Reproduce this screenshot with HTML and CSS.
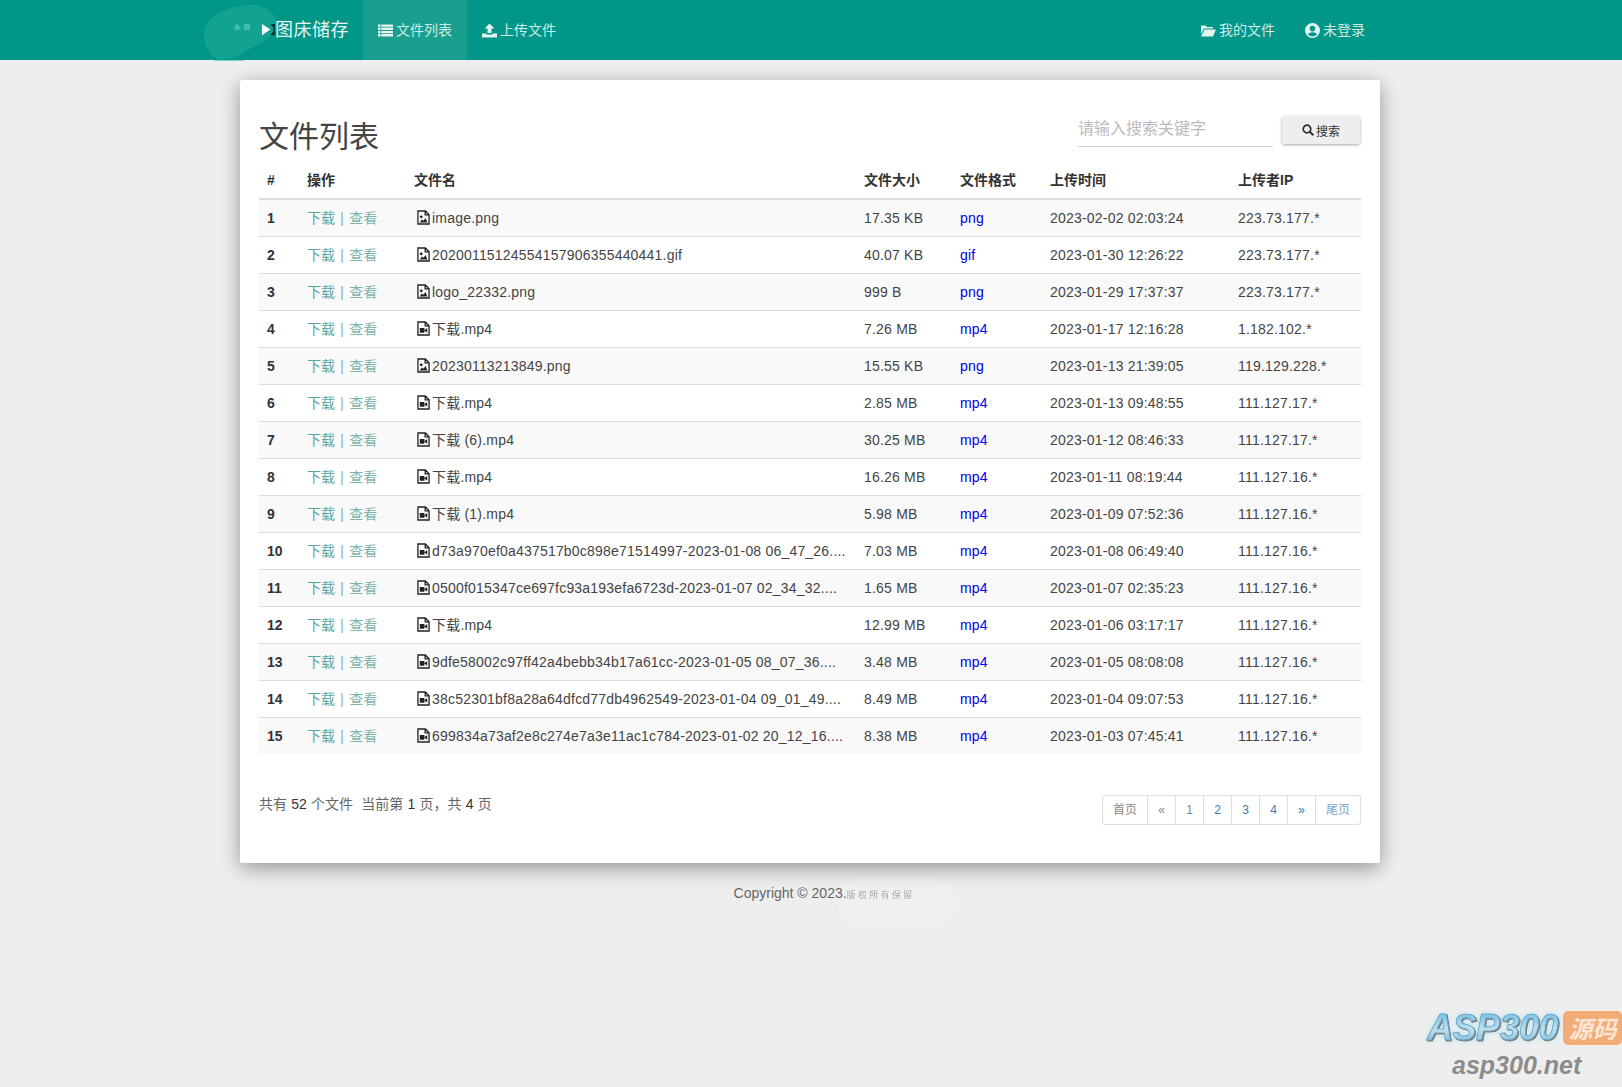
FILE: index.html
```html
<!DOCTYPE html>
<html lang="zh-CN">
<head>
<meta charset="utf-8">
<title>文件列表</title>
<link rel="stylesheet" href="styles.css">
</head>
<body>
<svg class="defs" width="0" height="0" aria-hidden="true">
  <symbol id="i-img" viewBox="0 0 14 16"><path fill="none" stroke="currentColor" stroke-width="1.4" d="M1 1h8l4 4v10H1zM8.800 1v4.200H13"/><path fill="currentColor" d="M2.800 13.500l2.700-3.400 1.500 1.500 2.200-3 2 4.900z"/><circle cx="4.600" cy="7.300" r="1.500" fill="currentColor"/></symbol>
  <symbol id="i-vid" viewBox="0 0 14 16"><path fill="none" stroke="currentColor" stroke-width="1.4" d="M1 1h8l4 4v10H1zM8.800 1v4.200H13"/><path fill="currentColor" d="M3 7.500h5v5H3zM8 9.800l3-2.300v5l-3-2.300z"/></symbol>
</svg>
<header class="navbar">
  <div class="nav-inner">
    <svg class="nav-blob" viewBox="0 0 76 60" aria-hidden="true"><path class="blob-body" d="M1 36C0 20 18 8 44 5c16-2 30 8 30 20 0 14-20 18-30 26-6 5-18 8-28 9C8 56 2 48 1 36z"/><path class="blob-mark" d="M31 27l3-4 4 5-2 2h-4zM41 24h6v6h-6z"/><path class="blob-line" d="M11 60.500h30"/></svg>
    <a class="brand"><svg class="brand-play" viewBox="0 0 16 16" aria-hidden="true"><path fill="#fff" d="M1 2l9 6-9 6z"/><path fill="#17352f" d="M10 2h5v12h-5l2-3h1V5h-1z"/></svg>图床储存</a>
    <a class="nav-link active"><svg class="nav-icon" viewBox="0 0 15 12" aria-hidden="true"><path fill="currentColor" d="M0 0h2.500v2.300H0zM3.300 0H15v2.300H3.300zM0 3.100h2.500v2.400H0zM3.300 3.100H15v2.400H3.300zM0 6.400h2.500v2.400H0zM3.300 6.400H15v2.400H3.300zM0 9.600h2.500V12H0zM3.300 9.600H15V12H3.300z"/></svg>文件列表</a>
    <a class="nav-link"><svg class="nav-icon" viewBox="0 0 15 14" aria-hidden="true"><path fill="currentColor" d="M7.500 0L12.500 5H9.500v4.500h-4V5h-3zM0 10h4.500v1h6v-1H15v4H0z"/></svg>上传文件</a>
    <div class="nav-right">
      <a class="nav-link"><svg class="nav-icon" viewBox="0 0 15 12" aria-hidden="true"><path fill="currentColor" d="M0 1h5l1 1.500h6V4H3L0 10zM3.600 5H15l-3 7H0z"/></svg>我的文件</a>
      <a class="nav-link"><svg class="nav-icon" viewBox="0 0 15 15" aria-hidden="true"><path fill="currentColor" fill-rule="evenodd" d="M7.500 0a7.500 7.500 0 1 0 0 15 7.500 7.500 0 0 0 0-15zm0 2.800a2.800 2.800 0 1 1 0 5.600 2.800 2.800 0 0 1 0-5.600zm0 10.600c-1.800 0-3.400-.8-4.500-2.100.5-1.200 2.600-2 4.500-2s4 .8 4.500 2c-1.100 1.300-2.700 2.100-4.500 2.100z"/></svg>未登录</a>
    </div>
  </div>
</header>

<main class="card">
  <div class="card-head">
    <h1>文件列表</h1>
    <form class="search">
      <input class="search-input" type="text" placeholder="请输入搜索关键字">
      <button class="search-btn" type="button"><svg class="search-icon" viewBox="0 0 12 12" aria-hidden="true"><circle cx="5" cy="5" r="3.800" fill="none" stroke="currentColor" stroke-width="1.700"/><path stroke="currentColor" stroke-width="2" d="M7.800 7.800L11.300 11.300"/></svg>搜索</button>
    </form>
  </div>
  <table class="files">
    <colgroup><col class="c-n"><col class="c-op"><col class="c-name"><col class="c-size"><col class="c-fmt"><col class="c-time"><col class="c-ip"></colgroup>
    <thead><tr><th>#</th><th>操作</th><th>文件名</th><th>文件大小</th><th>文件格式</th><th>上传时间</th><th>上传者IP</th></tr></thead>
    <tbody>
      <tr><td class="num">1</td><td><a class="op">下载</a> <i>|</i> <a class="op view">查看</a></td><td><div class="fname"><svg class="ficon"><use href="#i-img"/></svg><span>image.png</span></div></td><td>17.35 KB</td><td><a class="fmt">png</a></td><td>2023-02-02 02:03:24</td><td>223.73.177.*</td></tr>
      <tr><td class="num">2</td><td><a class="op">下载</a> <i>|</i> <a class="op view">查看</a></td><td><div class="fname"><svg class="ficon"><use href="#i-img"/></svg><span>20200115124554157906355440441.gif</span></div></td><td>40.07 KB</td><td><a class="fmt">gif</a></td><td>2023-01-30 12:26:22</td><td>223.73.177.*</td></tr>
      <tr><td class="num">3</td><td><a class="op">下载</a> <i>|</i> <a class="op view">查看</a></td><td><div class="fname"><svg class="ficon"><use href="#i-img"/></svg><span>logo_22332.png</span></div></td><td>999 B</td><td><a class="fmt">png</a></td><td>2023-01-29 17:37:37</td><td>223.73.177.*</td></tr>
      <tr><td class="num">4</td><td><a class="op">下载</a> <i>|</i> <a class="op view">查看</a></td><td><div class="fname"><svg class="ficon"><use href="#i-vid"/></svg><span>下载.mp4</span></div></td><td>7.26 MB</td><td><a class="fmt">mp4</a></td><td>2023-01-17 12:16:28</td><td>1.182.102.*</td></tr>
      <tr><td class="num">5</td><td><a class="op">下载</a> <i>|</i> <a class="op view">查看</a></td><td><div class="fname"><svg class="ficon"><use href="#i-img"/></svg><span>20230113213849.png</span></div></td><td>15.55 KB</td><td><a class="fmt">png</a></td><td>2023-01-13 21:39:05</td><td>119.129.228.*</td></tr>
      <tr><td class="num">6</td><td><a class="op">下载</a> <i>|</i> <a class="op view">查看</a></td><td><div class="fname"><svg class="ficon"><use href="#i-vid"/></svg><span>下载.mp4</span></div></td><td>2.85 MB</td><td><a class="fmt">mp4</a></td><td>2023-01-13 09:48:55</td><td>111.127.17.*</td></tr>
      <tr><td class="num">7</td><td><a class="op">下载</a> <i>|</i> <a class="op view">查看</a></td><td><div class="fname"><svg class="ficon"><use href="#i-vid"/></svg><span>下载 (6).mp4</span></div></td><td>30.25 MB</td><td><a class="fmt">mp4</a></td><td>2023-01-12 08:46:33</td><td>111.127.17.*</td></tr>
      <tr><td class="num">8</td><td><a class="op">下载</a> <i>|</i> <a class="op view">查看</a></td><td><div class="fname"><svg class="ficon"><use href="#i-vid"/></svg><span>下载.mp4</span></div></td><td>16.26 MB</td><td><a class="fmt">mp4</a></td><td>2023-01-11 08:19:44</td><td>111.127.16.*</td></tr>
      <tr><td class="num">9</td><td><a class="op">下载</a> <i>|</i> <a class="op view">查看</a></td><td><div class="fname"><svg class="ficon"><use href="#i-vid"/></svg><span>下载 (1).mp4</span></div></td><td>5.98 MB</td><td><a class="fmt">mp4</a></td><td>2023-01-09 07:52:36</td><td>111.127.16.*</td></tr>
      <tr><td class="num">10</td><td><a class="op">下载</a> <i>|</i> <a class="op view">查看</a></td><td><div class="fname"><svg class="ficon"><use href="#i-vid"/></svg><span>d73a970ef0a437517b0c898e71514997-2023-01-08 06_47_26....</span></div></td><td>7.03 MB</td><td><a class="fmt">mp4</a></td><td>2023-01-08 06:49:40</td><td>111.127.16.*</td></tr>
      <tr><td class="num">11</td><td><a class="op">下载</a> <i>|</i> <a class="op view">查看</a></td><td><div class="fname"><svg class="ficon"><use href="#i-vid"/></svg><span>0500f015347ce697fc93a193efa6723d-2023-01-07 02_34_32....</span></div></td><td>1.65 MB</td><td><a class="fmt">mp4</a></td><td>2023-01-07 02:35:23</td><td>111.127.16.*</td></tr>
      <tr><td class="num">12</td><td><a class="op">下载</a> <i>|</i> <a class="op view">查看</a></td><td><div class="fname"><svg class="ficon"><use href="#i-vid"/></svg><span>下载.mp4</span></div></td><td>12.99 MB</td><td><a class="fmt">mp4</a></td><td>2023-01-06 03:17:17</td><td>111.127.16.*</td></tr>
      <tr><td class="num">13</td><td><a class="op">下载</a> <i>|</i> <a class="op view">查看</a></td><td><div class="fname"><svg class="ficon"><use href="#i-vid"/></svg><span>9dfe58002c97ff42a4bebb34b17a61cc-2023-01-05 08_07_36....</span></div></td><td>3.48 MB</td><td><a class="fmt">mp4</a></td><td>2023-01-05 08:08:08</td><td>111.127.16.*</td></tr>
      <tr><td class="num">14</td><td><a class="op">下载</a> <i>|</i> <a class="op view">查看</a></td><td><div class="fname"><svg class="ficon"><use href="#i-vid"/></svg><span>38c52301bf8a28a64dfcd77db4962549-2023-01-04 09_01_49....</span></div></td><td>8.49 MB</td><td><a class="fmt">mp4</a></td><td>2023-01-04 09:07:53</td><td>111.127.16.*</td></tr>
      <tr><td class="num">15</td><td><a class="op">下载</a> <i>|</i> <a class="op view">查看</a></td><td><div class="fname"><svg class="ficon"><use href="#i-vid"/></svg><span>699834a73af2e8c274e7a3e11ac1c784-2023-01-02 20_12_16....</span></div></td><td>8.38 MB</td><td><a class="fmt">mp4</a></td><td>2023-01-03 07:45:41</td><td>111.127.16.*</td></tr>
    </tbody>
  </table>
  <div class="card-foot">
    <p class="summary">共有 <b>52</b> 个文件&nbsp;&nbsp;当前第 <b>1</b> 页，共 <b>4</b> 页</p>
    <nav class="pager">
      <a class="off">首页</a><a class="off">«</a><a class="off">1</a><a>2</a><a>3</a><a>4</a><a>»</a><a>尾页</a>
    </nav>
  </div>
</main>

<footer class="footer">
  <span class="copy">Copyright © 2023.<span class="smudge">版权所有保留</span></span>
</footer>

<aside class="mark">
  <div class="mark-top"><span class="mark-asp">ASP300</span><span class="mark-badge">源码</span></div>
  <div class="mark-url">asp300.net</div>
</aside>
</body>
</html>
```

FILE: styles.css
```css
* { box-sizing: border-box; }
html, body { margin: 0; padding: 0; }
body {
  position: relative;
  min-height: 1087px;
  background: #eeeeee;
  color: #333;
  font: 14px/20px "Liberation Sans", "Noto Sans CJK SC", sans-serif;
  overflow: hidden;
}
.defs { position: absolute; }
a { text-decoration: none; cursor: pointer; }

.navbar { height: 60px; background: #009688; }
.nav-inner {
  position: relative;
  width: 1170px;
  height: 60px;
  margin: 0 auto;
  padding-left: 15px;
  display: flex;
}
.nav-blob { position: absolute; left: -23px; top: 0; width: 76px; height: 60px; overflow: visible; }
.blob-body { fill: #11a390; }
.blob-mark { fill: #3dbdaa; }
.blob-line { stroke: #7fd2c6; stroke-width: 1; }
.brand {
  position: relative;
  width: 122px;
  padding-left: 19px;
  display: flex;
  align-items: center;
  color: #e6f5f2;
  font-size: 18px;
  letter-spacing: .5px;
  text-indent: 15px;
}
.brand-play { position: absolute; left: 20px; top: 22px; width: 15px; height: 15px; }
.nav-link {
  height: 60px;
  padding: 0 15px;
  display: flex;
  align-items: center;
  color: #cdebe6;
  font-size: 14px;
}
.nav-link.active { background: #1a9f8e; }
.nav-icon { width: 15px; height: 15px; margin-right: 3px; color: #e2f3f0; }
.nav-right { margin-left: auto; display: flex; margin-right: 16px; }

.card {
  width: 1140px;
  height: 783px;
  margin: 20px 0 0 240px;
  padding: 0 19px;
  background: #fff;
  border-radius: 2px;
  box-shadow: 0 5px 20px rgba(0, 0, 0, .38);
}
.card-head {
  height: 86px;
  padding-top: 39px;
  display: flex;
  justify-content: space-between;
  align-items: flex-start;
}
h1 {
  margin: 0;
  font-size: 30px;
  font-weight: 400;
  line-height: 36px;
  color: #444;
}
.search { display: flex; align-items: flex-start; margin-top: -4px; margin-right: 1px; }
.search-input {
  width: 195px;
  height: 32px;
  margin-right: 9px;
  padding: 0 0 4px;
  border: 0;
  border-bottom: 1px solid #d2d2d2;
  outline: 0;
  font: 16px "Liberation Sans", "Noto Sans CJK SC", sans-serif;
  background: transparent;
}
.search-input::placeholder { color: #bbb; opacity: 1; }
.search-btn {
  width: 78px;
  height: 28px;
  margin-top: 1px;
  padding: 0;
  display: flex;
  align-items: center;
  justify-content: center;
  border: 0;
  border-radius: 2px;
  background: #eeeeee;
  color: #333;
  font: 12px "Liberation Sans", "Noto Sans CJK SC", sans-serif;
  box-shadow: 0 1px 3px rgba(0, 0, 0, .35);
}
.search-icon { width: 12px; height: 12px; margin-right: 2px; }

.files {
  width: 1102px;
  border-collapse: collapse;
  table-layout: fixed;
}
.c-n { width: 40px; }
.c-op { width: 107px; }
.c-name { width: 450px; }
.c-size { width: 96px; }
.c-fmt { width: 90px; }
.c-time { width: 188px; }
.c-ip { width: 131px; }
.files th {
  height: 33px;
  padding: 0 8px 5px;
  text-align: left;
  font-weight: 700;
  font-size: 14px;
  color: #333;
  border-bottom: 2px solid #ddd;
}
.files td {
  height: 37px;
  padding: 0 8px;
  border-bottom: 1px solid #ddd;
  color: #444;
  white-space: nowrap;
  letter-spacing: .2px;
}
.files tbody tr:nth-child(odd) { background: #f9f9f9; }
.files tbody tr:last-child td { border-bottom: 0; }
.files td.num { font-weight: 700; color: #333; letter-spacing: 0; }
.op { color: #5fa699; letter-spacing: 0; }
.op.view { color: #7fb3a9; }
.files i { font-style: normal; font-size: 15px; color: #8ab4c4; margin: 0 1px; }
.fmt { color: #0000ee; }
.fname { display: flex; align-items: center; }
.fname span { white-space: nowrap; }
.ficon { width: 13px; height: 15px; margin: 0 2px 0 3px; color: #222; flex: none; }

.card-foot {
  display: flex;
  justify-content: space-between;
  align-items: flex-start;
  margin-top: 40px;
}
.summary { margin: 0; color: #666; line-height: 20px; word-spacing: .3px; }
.summary b { font-weight: 400; color: #333; }
.pager {
  display: flex;
  margin-top: 1px;
  font-size: 12px;
  border: 1px solid #ddd;
  border-radius: 3px;
  background: #fff;
}
.pager a {
  min-width: 28px;
  height: 28px;
  padding: 0 10px;
  display: flex;
  align-items: center;
  justify-content: center;
  color: #337ab7;
  border-left: 1px solid #ddd;
}
.pager a:first-child { border-left: 0; }
.pager a.off { color: #888; }
.pager a:last-child { color: #7aa5cc; }

.footer {
  position: relative;
  height: 40px;
  padding-top: 20px;
  text-align: center;
  color: #666;
}
.copy { position: relative; left: 13px; }
.smudge { color: #aaa; font-size: 9px; letter-spacing: 2.300px; filter: blur(.7px); }
.footer::after {
  content: "";
  position: absolute;
  left: 838px;
  top: 15px;
  width: 118px;
  height: 50px;
  border-radius: 24px;
  background: #f0f0f0;
  z-index: -1;
}

.mark {
  position: absolute;
  left: 1427px;
  top: 1010px;
  width: 195px;
}
.mark-top { display: flex; align-items: center; height: 36px; }
.mark-asp {
  width: 136px;
  font: italic 700 36px/36px "Liberation Sans", sans-serif;
  letter-spacing: -.5px;
  background: linear-gradient(#69bde8, #b9e2f2 55%, #6cb4dc);
  -webkit-background-clip: text;
  background-clip: text;
  color: transparent;
  -webkit-text-stroke: .6px #6d8aa0;
  filter: drop-shadow(1px 1px 0 #777) drop-shadow(0 0 2px #a6e6f6);
}
.mark-badge {
  width: 59px;
  height: 34px;
  display: flex;
  align-items: center;
  justify-content: center;
  border-radius: 5px;
  background: #f2ac78;
  color: #fbe6d6;
  font: italic 700 24px/1 "Noto Sans CJK SC", sans-serif;
}
.mark-url {
  margin: 5px 0 0 25px;
  color: #8c8c8c;
  font: italic 700 25px/28px "Liberation Sans", sans-serif;
}
```
